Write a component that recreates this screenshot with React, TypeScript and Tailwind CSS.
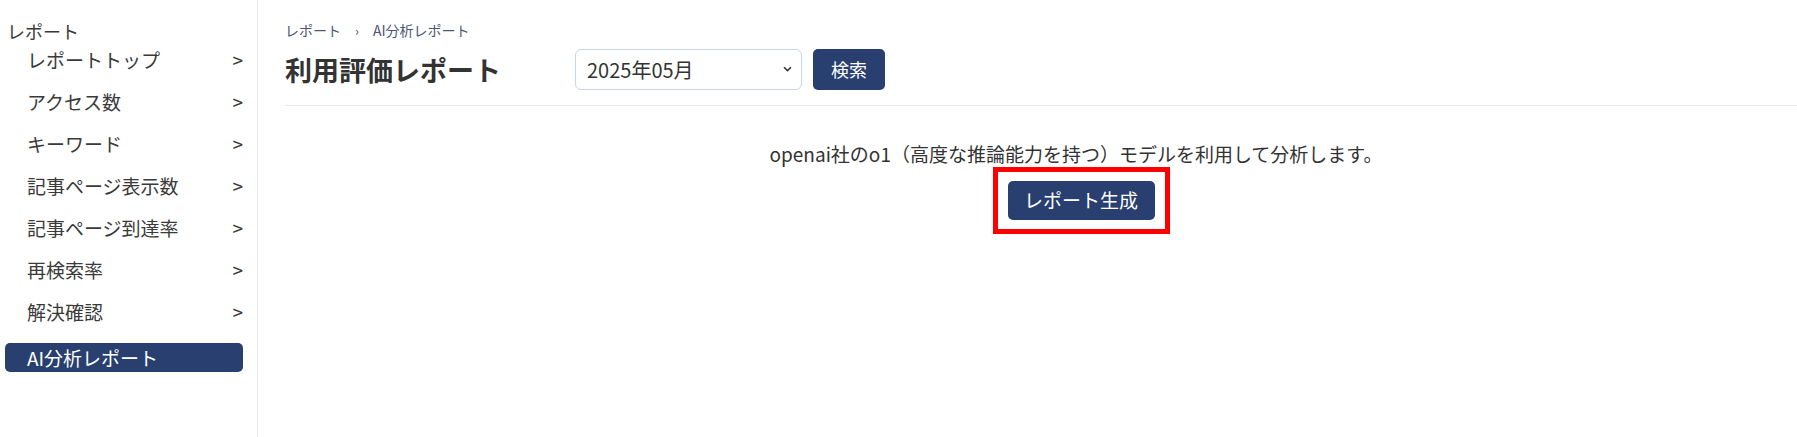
import React from "react";

const items = [
  "レポートトップ",
  "アクセス数",
  "キーワード",
  "記事ページ表示数",
  "記事ページ到達率",
  "再検索率",
  "解決確認",
];

export default function App() {
  return (
    <div
      className="flex w-[1797px] h-[437px] bg-white text-[#333333] overflow-hidden"
      style={{ fontFamily: '"Noto Sans CJK JP", "Noto Sans", sans-serif' }}
    >
      <aside className="w-[258px] shrink-0 border-r border-[#e6e9f0] h-full">
        <div className="pt-[24px] pl-[7px] text-[18px] leading-[15px] text-[#3a3a3a]">レポート</div>
        <ul>
          {items.map((t) => (
            <li
              key={t}
              className="h-[42px] flex items-center justify-between pl-[27px] pr-[14px] text-[19px] text-[#3a3a3a]"
            >
              <span>{t}</span>
              <span className="text-[19px]">&gt;</span>
            </li>
          ))}
          <li className="h-[42px] flex items-center">
            <div className="ml-[5px] mt-[6px] w-[238px] h-[29px] rounded-[5px] bg-[#283f6f] text-white text-[19px] leading-[29px] pl-[22px]">
              AI分析レポート
            </div>
          </li>
        </ul>
      </aside>
      <main className="flex-1 pl-[27px] pt-[20px]">
        <div className="flex items-center h-[21px] text-[14px] text-[#4a5578]">
          <span>レポート</span>
          <span className="mx-[14px] text-[13px]">›</span>
          <span>AI分析レポート</span>
        </div>
        <div className="flex items-center mt-[8px] h-[41px]">
          <h1 className="w-[290px] text-[27px] font-bold text-[#333333] leading-none">利用評価レポート</h1>
          <div className="relative">
            <select
              className="appearance-none w-[227px] h-[41px] rounded-[6px] border border-[#c9d6ea] bg-white pl-[11px] text-[20px] text-[#333333] outline-none"
              defaultValue="2025-05"
            >
              <option value="2025-05">2025年05月</option>
            </select>
            <svg
              className="absolute right-[10px] top-[17px] pointer-events-none"
              width="9"
              height="6"
              viewBox="0 0 9 6"
            >
              <path d="M1 1.2 L4.5 4.6 L8 1.2" fill="none" stroke="#333" strokeWidth="1.6" />
            </svg>
          </div>
          <button className="ml-[11px] w-[72px] h-[41px] rounded-[5px] bg-[#283f6f] text-white text-[18px]">
            検索
          </button>
        </div>
        <div className="mt-[15px] h-px bg-[#e6eaf0]" />
        <div className="flex flex-col items-center pl-[70px] mt-[34px]">
          <p className="text-[19px] leading-[27px] text-[#333333]">
            openai社のo1（高度な推論能力を持つ）モデルを利用して分析します。
          </p>
          <div className="border-[5px] border-[#ff0000] px-[10px] py-[9px] ml-[10px]">
            <button className="w-[147px] h-[39px] rounded-[5px] bg-[#283f6f] text-white text-[19px]">
              レポート生成
            </button>
          </div>
        </div>
      </main>
    </div>
  );
}
